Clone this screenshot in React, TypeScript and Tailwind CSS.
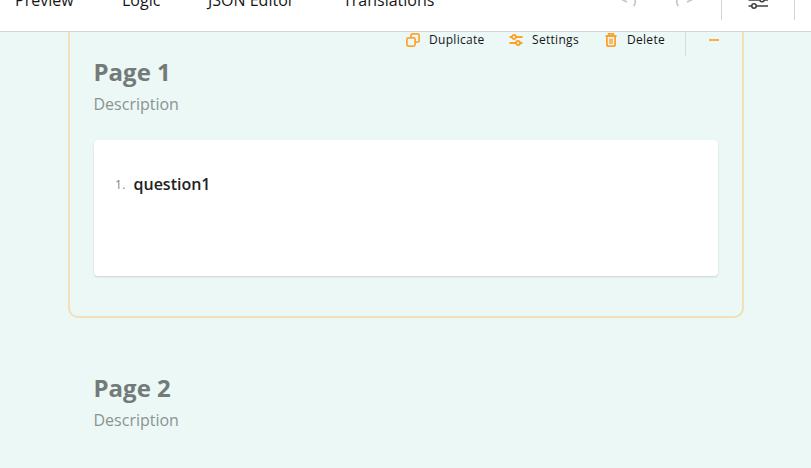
import type { ReactNode } from "react";

const tabs = [
  { label: "Preview", place: "ml-[15px] w-[107px]" },
  { label: "Logic", place: "w-[86px]" },
  { label: "JSON Editor", place: "w-[135px]" },
  { label: "Translations", place: "w-[120px]" },
];

function DuplicateIcon() {
  return (
    <svg width="16" height="16" viewBox="0 0 16 16" fill="none" stroke="#ff9814" strokeOpacity=".85" strokeWidth="1.8">
      <rect x="1.9" y="5.9" width="8.2" height="8.2" rx="1.5" />
      <path d="M6 5.5V3.4Q6 1.9 7.5 1.9h5.1q1.5 0 1.5 1.5v5.2q0 1.5-1.5 1.5H10.500" />
    </svg>
  );
}

function SettingsIcon() {
  return (
    <svg width="16" height="16" viewBox="0 0 16 16" fill="none" stroke="#ff9814" strokeOpacity=".9" strokeWidth="1.8">
      <circle cx="6" cy="5" r="2" />
      <circle cx="10" cy="11" r="2" />
      <path d="M1.5 5H4M8 5h6.5M1.5 11H8M12 11h2.5" />
    </svg>
  );
}

function DeleteIcon() {
  return (
    <svg width="16" height="16" viewBox="0 0 16 16" fill="none" stroke="#ff9814" strokeOpacity=".9" strokeWidth="1.8">
      <path d="M2.5 4h11M5.8 3.5V1.9h4.4v1.6M3.9 4.5V12.4q0 1.7 1.7 1.7h4.8q1.7 0 1.7-1.7V4.5" />
      <path d="M7 6.5v5.5M9 6.5v5.5" strokeWidth="1.4" />
    </svg>
  );
}

function Action({ icon, label, className }: { icon: ReactNode; label: string; className: string }) {
  return (
    <button className={`flex h-4 shrink-0 items-center gap-2 whitespace-nowrap text-xs leading-4 tracking-[0.3px] text-[#161616] ${className}`}>
      {icon}
      <span>{label}</span>
    </button>
  );
}

function Heading({ title }: { title: string }) {
  return (
    <div>
      <h2 className="-ml-[0.5px] text-2xl font-bold leading-8 text-[#747a78]">{title}</h2>
      <p className="-ml-[0.5px] mt-1 text-base font-normal leading-6 text-[#8b9391]">Description</p>
    </div>
  );
}

export default function App() {
  return (
    <div className="flex h-[468px] w-[811px] flex-col overflow-hidden bg-[#ebf8f6] font-['Open_Sans','Noto_Sans',sans-serif]">
      <header className="flex h-8 shrink-0 overflow-hidden border-b border-[#d4d4d4] bg-white">
        <nav className="-mt-3 flex h-6 text-base leading-6 text-[#161616]">
          {tabs.map((tab) => (
            <span key={tab.label} className={`whitespace-nowrap ${tab.place}`}>
              {tab.label}
            </span>
          ))}
        </nav>
        <div className="ml-auto flex">
          <svg className="-mt-3" width="103" height="24" viewBox="0 0 103 24" fill="none" stroke="#161616" strokeOpacity=".25" strokeWidth="1.6">
            <path d="M12 10.5l7 3.5M27 12q1 4-1.6 6M69 12q-1 4 1.6 6M86.5 10.5L79 14" />
          </svg>
          <div className="ml-[10px] h-5 w-px bg-[#d4d4d4]" />
          <svg className="-mt-3 ml-[25px]" width="24" height="24" viewBox="0 0 24 24" fill="none" stroke="#404040" strokeWidth="1.6">
            <circle cx="15" cy="11.5" r="2.2" />
            <circle cx="7" cy="18" r="2.2" />
            <path d="M1.5 12h11M17 12h4M1.5 18H5M9 18h12" />
          </svg>
          <div className="ml-[23px] mr-4 h-5 w-px bg-[#d4d4d4]" />
        </div>
      </header>

      <main className="flex flex-col pl-[68px]">
        <section className="h-[286px] w-[676px] rounded-b-[10px] border-x-2 border-b-2 border-[#f2dfb9] px-6">
          <div className="flex h-6 items-start">
            <Action icon={<DuplicateIcon />} label="Duplicate" className="ml-[311px] w-[103px]" />
            <Action icon={<SettingsIcon />} label="Settings" className="w-[95px]" />
            <Action icon={<DeleteIcon />} label="Delete" className="w-[82px]" />
            <div className="h-6 w-px shrink-0 bg-[#d4dcda]" />
            <div className="ml-[23px] mt-[7px] h-0.5 w-[10px] shrink-0 bg-[#ffad44]" />
          </div>
          <Heading title="Page 1" />
          <article className="mt-6 flex h-[136px] w-[624px] items-start rounded bg-white pl-[21px] pt-8 shadow-[0_1px_2px_rgba(0,0,0,0.15)]">
            <span className="w-[18.5px] text-xs leading-[26px] tracking-[0.3px] text-[#858585]">1.</span>
            <span className="text-base font-semibold leading-6 text-[#222222]">question1</span>
          </article>
        </section>
        <section className="ml-[26px] mt-[54px]">
          <Heading title="Page 2" />
        </section>
      </main>
    </div>
  );
}
